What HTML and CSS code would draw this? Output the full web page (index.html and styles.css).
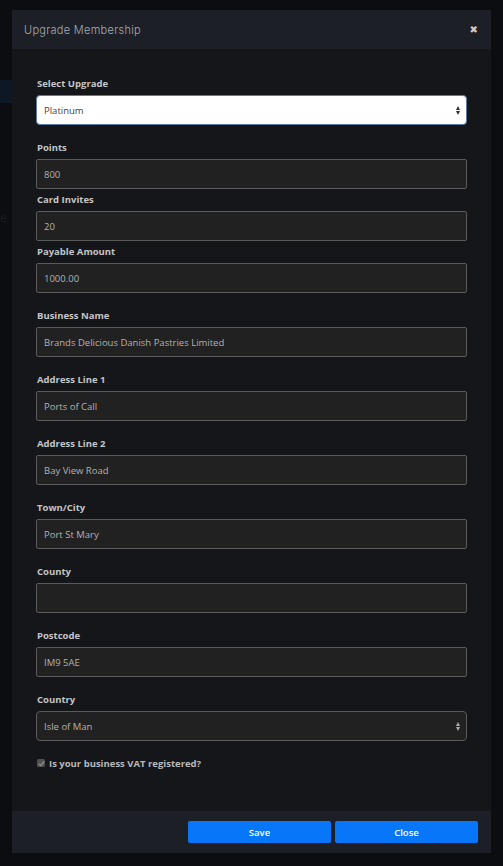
FILE: index.html
```html
<!DOCTYPE html>
<html>
<head>
<meta charset="utf-8">
<link rel="stylesheet" href="styles.css">
</head>
<body>
<div class="backdrop-strip"></div>
<div class="backdrop-letter">e</div>
<div class="modal">
  <div class="modal-header">
    <span class="modal-title">Upgrade Membership</span>
    <span class="close-x">&#10006;</span>
  </div>
  <div class="modal-body">
    <div class="group">
      <label class="lbl">Select Upgrade</label>
      <div class="select select-light">Platinum<span class="arrows"><i class="up"></i><i class="down"></i></span></div>
    </div>
    <div class="group tight">
      <label class="lbl">Points</label>
      <div class="input">800</div>
    </div>
    <div class="group tight">
      <label class="lbl">Card Invites</label>
      <div class="input">20</div>
    </div>
    <div class="group">
      <label class="lbl">Payable Amount</label>
      <div class="input">1000.00</div>
    </div>
    <div class="group">
      <label class="lbl">Business Name</label>
      <div class="input">Brands Delicious Danish Pastries Limited</div>
    </div>
    <div class="group">
      <label class="lbl">Address Line 1</label>
      <div class="input">Ports of Call</div>
    </div>
    <div class="group">
      <label class="lbl">Address Line 2</label>
      <div class="input">Bay View Road</div>
    </div>
    <div class="group">
      <label class="lbl">Town/City</label>
      <div class="input">Port St Mary</div>
    </div>
    <div class="group">
      <label class="lbl">County</label>
      <div class="input"></div>
    </div>
    <div class="group">
      <label class="lbl">Postcode</label>
      <div class="input">IM9 5AE</div>
    </div>
    <div class="group">
      <label class="lbl">Country</label>
      <div class="select select-dark">Isle of Man<span class="arrows"><i class="up"></i><i class="down"></i></span></div>
    </div>
    <div class="check-row">
      <span class="checkbox"><svg width="7" height="7" viewBox="0 0 8 8"><path d="M1 4.2 L3.1 6.2 L7 1.6" fill="none" stroke="#8a8a8a" stroke-width="1.6"/></svg></span>
      <span class="check-label">Is your business VAT registered?</span>
    </div>
  </div>
  <div class="modal-footer">
    <button class="btn">Save</button>
    <button class="btn">Close</button>
  </div>
</div>
</body>
</html>
```
FILE: styles.css
```css
html, body {
  margin: 0;
  padding: 0;
}
body {
  background: #0c0d10;
  font-family: "Open Sans", "Liberation Sans", sans-serif;
  padding: 10px 12px;
  box-sizing: border-box;
  height: 866px;
  position: relative;
}
.backdrop-strip {
  position: absolute;
  left: 0;
  top: 80px;
  width: 12px;
  height: 23px;
  background: #0d1824;
}
.backdrop-letter {
  position: absolute;
  left: 0;
  top: 209px;
  font-size: 12px;
  color: #1a1c20;
}
.modal {
  position: relative;
  width: 479px;
  background: #15161a;
  display: flex;
  flex-direction: column;
}
.modal-header {
  height: 39px;
  background: #1c1f26;
  display: flex;
  align-items: center;
  justify-content: space-between;
  padding: 0 13px 0 12px;
}
.modal-title {
  font-family: "Inter", "Open Sans", sans-serif;
  font-size: 11px;
  font-weight: 300;
  color: #a9abaf;
  letter-spacing: 0.3px;
}
.close-x {
  font-size: 10px;
  color: #c9cacc;
  font-weight: bold;
  font-family: "DejaVu Sans", sans-serif;
}
.modal-body {
  padding: 28px 24px 42px 24px;
  display: flex;
  flex-direction: column;
}
.group {
  display: flex;
  flex-direction: column;
  margin-bottom: 16px;
}
.group.tight {
  margin-bottom: 4px;
}
.lbl {
  font-size: 9.5px;
  font-weight: 700;
  color: #c4c5c7;
  line-height: 12px;
  padding-top: 1px;
  margin-bottom: 5px;
  padding-left: 1px;
}
.input {
  height: 30px;
  box-sizing: border-box;
  background: #212121;
  border: 1px solid #5a5a5a;
  border-radius: 2px;
  color: #b2b2b2;
  font-size: 9.5px;
  display: flex;
  align-items: center;
  padding-left: 7px;
}
.select {
  height: 30px;
  box-sizing: border-box;
  border-radius: 4px;
  font-size: 9.5px;
  display: flex;
  align-items: center;
  justify-content: space-between;
  padding: 0 6px 0 7px;
}
.select-light {
  background: #ffffff;
  border: 1px solid #5b7aa6;
  color: #444;
}
.select-dark {
  background: #212121;
  border: 1px solid #5a5a5a;
  color: #b2b2b2;
}
.arrows {
  display: flex;
  flex-direction: column;
  gap: 1px;
}
.arrows i {
  display: block;
  width: 0;
  height: 0;
  border-left: 2.5px solid transparent;
  border-right: 2.5px solid transparent;
}
.select-light .up { border-bottom: 4px solid #333; }
.select-light .down { border-top: 4px solid #333; }
.select-dark .up { border-bottom: 4px solid #aaa; }
.select-dark .down { border-top: 4px solid #aaa; }
.check-row {
  display: flex;
  align-items: center;
  gap: 4px;
  padding-left: 1px;
  height: 12px;
}
.checkbox {
  width: 8px;
  height: 8px;
  background: #505050;
  border-radius: 1.5px;
  display: flex;
  align-items: center;
  justify-content: center;
}
.check-label {
  font-size: 9.5px;
  font-weight: 700;
  color: #b8b9bb;
}
.modal-footer {
  height: 42px;
  box-sizing: border-box;
  background: #1c1f26;
  display: flex;
  justify-content: flex-end;
  align-items: flex-start;
  gap: 4px;
  padding: 10px 13px 0 0;
}
.btn {
  width: 143px;
  height: 22px;
  background: #0876f9;
  border: none;
  border-radius: 2px;
  color: #ffffff;
  font-family: "Open Sans", sans-serif;
  font-size: 9.5px;
  font-weight: 600;
  padding: 0;
}
```
